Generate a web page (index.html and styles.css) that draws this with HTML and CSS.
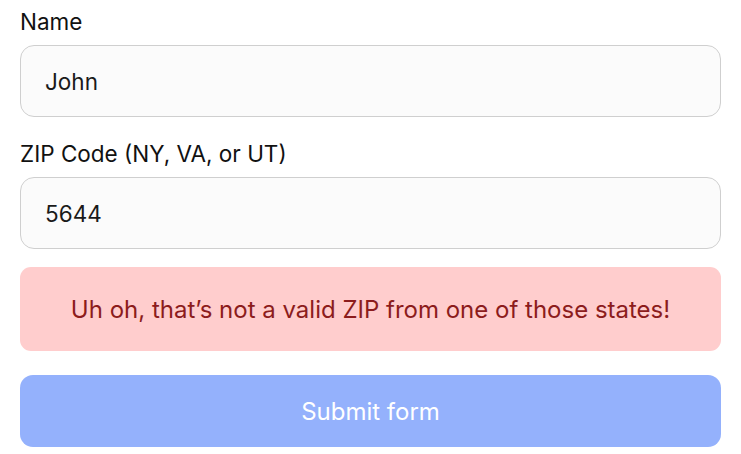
FILE: index.html
```html
<!DOCTYPE html>
<html lang="en">
<head>
<meta charset="utf-8">
<title>Form</title>
<link rel="stylesheet" href="styles.css">
</head>
<body>
<form class="form">
  <label class="label" for="name">Name</label>
  <input class="field" id="name" type="text" value="John">
  <label class="label label-gap" for="zip">ZIP Code (NY, VA, or UT)</label>
  <input class="field" id="zip" type="text" value="5644">
  <div class="error">Uh oh, that’s not a valid ZIP from one of those states!</div>
  <button class="submit" type="button">Submit form</button>
</form>
</body>
</html>
```

FILE: styles.css
```css
html, body {
  margin: 0;
  padding: 0;
  background: #ffffff;
}
body {
  font-family: Inter, "Noto Sans", sans-serif;
  color: #111111;
}
.form {
  display: flex;
  flex-direction: column;
  padding: 5px 20px 0 20px;
}
.label {
  display: block;
  font-size: 22.5px;
  line-height: 33px;
  margin-bottom: 7px;
  color: #111111;
}
.label-gap {
  margin-top: 20px;
}
.field {
  box-sizing: border-box;
  height: 72px;
  width: 100%;
  border: 1px solid #cfcfcf;
  border-radius: 14px;
  background: #fbfbfb;
  padding: 0 24px;
  font-family: Inter, "Noto Sans", sans-serif;
  font-size: 22.5px;
  color: #1a1a1a;
  outline: none;
}
.error {
  box-sizing: border-box;
  margin-top: 18px;
  height: 84px;
  border-radius: 11px;
  background: #ffcdcd;
  color: #8c1c1c;
  font-size: 24px;
  display: flex;
  align-items: center;
  justify-content: center;
}
.submit {
  margin-top: 24px;
  height: 72px;
  border: none;
  border-radius: 13px;
  background: #94b1fc;
  color: #ffffff;
  font-family: Inter, "Noto Sans", sans-serif;
  font-size: 24px;
}
```
